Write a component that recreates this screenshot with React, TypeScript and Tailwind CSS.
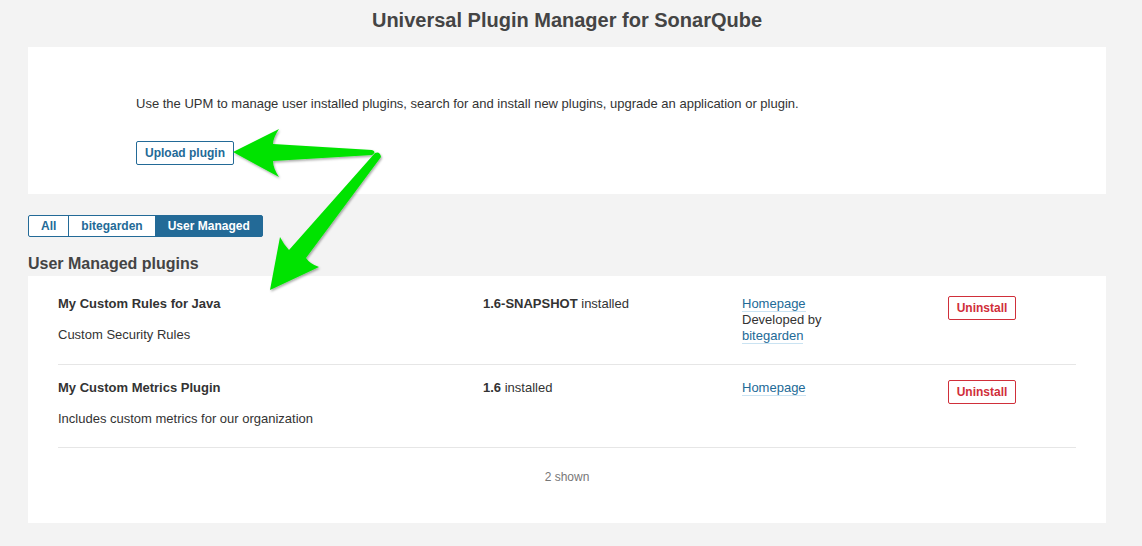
import React from 'react';

const plugins = [
    {
        name: 'My Custom Rules for Java',
        description: 'Custom Security Rules',
        version: '1.6-SNAPSHOT',
        developer: 'bitegarden',
    },
    {
        name: 'My Custom Metrics Plugin',
        description: 'Includes custom metrics for our organization',
        version: '1.6',
        developer: null,
    },
];

const tabs = ['All', 'bitegarden', 'User Managed'];

function Arrows() {
    return (
        <svg className="absolute inset-0 pointer-events-none" width="1142" height="546" viewBox="0 0 1142 546">
            <defs>
                <filter id="shadow" x="-20%" y="-20%" width="140%" height="140%">
                    <feDropShadow dx="1" dy="1.5" stdDeviation="1.2" floodColor="#000" floodOpacity="0.35" />
                </filter>
            </defs>
            <g fill="#00e300" filter="url(#shadow)">
                <path d="M233 152 L279 129 Q273 138 273 144 L372 150 Q377 152 372 155 L273 161 Q273 168 279 177 Z" />
                <path d="M270 290 L319 267 Q310 264 306 258 L381 157 Q380 151 375 153 L289 250 Q284 245 280 237 Z" />
            </g>
        </svg>
    );
}

export default function App() {
    return (
        <div className="relative min-h-screen bg-[#f3f3f3] text-[#333] font-['Liberation_Sans',Arial,sans-serif] pb-[23px]">
            <div className="ml-[28px] mr-[36px] h-[47px] flex items-center justify-center">
                <h1 className="text-[20px] font-bold text-[#444] -mt-[7px]">Universal Plugin Manager for SonarQube</h1>
            </div>

            <div className="ml-[28px] mr-[36px] bg-white h-[147px] pl-[108px] pt-[49px]">
                <p className="text-[13px] leading-[16px]">
                    Use the UPM to manage user installed plugins, search for and install new plugins, upgrade an application or plugin.
                </p>
                <button className="mt-[29px] h-[24px] px-[8px] border border-[#236a97] rounded-[2px] text-[#236a97] text-[12px] font-bold bg-white">
                    Upload plugin
                </button>
            </div>

            <div className="mx-[28px] mt-[21px] flex h-[22px]">
                {tabs.map((t, i) => {
                    const active = t === 'User Managed';
                    return (
                        <button
                            key={t}
                            className={`px-[12px] text-[12px] font-bold border border-[#236a97] ${i > 0 ? '-ml-px' : 'rounded-l-[2px]'} ${i === tabs.length - 1 ? 'rounded-r-[2px]' : ''} ${active ? 'bg-[#236a97] text-white' : 'bg-white text-[#236a97]'}`}
                        >
                            {t}
                        </button>
                    );
                })}
            </div>

            <h2 className="mx-[28px] mt-[17px] mb-[2px] text-[16px] leading-[20px] font-bold text-[#444]">User Managed plugins</h2>

            <div className="ml-[28px] mr-[36px] bg-white px-[30px] pt-[5px] h-[247px]">
                {plugins.map(p => (
                    <div key={p.name} className="flex pt-[15px] pb-[20px] border-b border-[#e6e6e6] text-[13px] leading-[16px]">
                        <div className="w-[425px]">
                            <div className="font-bold">{p.name}</div>
                            <div className="mt-[15px]">{p.description}</div>
                        </div>
                        <div className="w-[259px]">
                            <span className="font-bold">{p.version}</span> installed
                        </div>
                        <div className="w-[206px]">
                            <a className="text-[#236a97] border-b border-[#cae3f2]">Homepage</a>
                            {p.developer && (
                                <>
                                    <div>Developed by</div>
                                    <a className="text-[#236a97] border-b border-[#cae3f2]">{p.developer}</a>
                                </>
                            )}
                        </div>
                        <div>
                            <button className="h-[24px] w-[68px] border border-[#d02f3a] rounded-[2px] text-[#d02f3a] text-[12px] font-bold bg-white">
                                Uninstall
                            </button>
                        </div>
                    </div>
                ))}
                <div className="text-center text-[12px] text-[#777] pt-[20px]">2 shown</div>
            </div>

            <Arrows />
        </div>
    );
}
